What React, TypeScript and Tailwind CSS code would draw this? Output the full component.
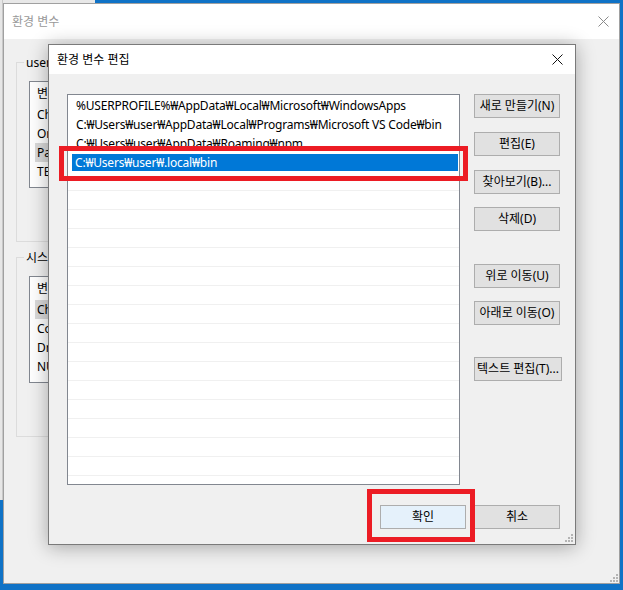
import React from 'react';

const font = "font-['Noto_Sans','Noto_Sans_CJK_KR',sans-serif]";

const CloseX = ({ color }: { color: string }) => (
  <svg width="11" height="11" viewBox="0 0 11 11">
    <path d="M0.5 0.5 L10.5 10.5 M10.5 0.5 L0.5 10.5" stroke={color} strokeWidth="1" />
  </svg>
);

const Grip = () => (
  <svg width="9" height="9" viewBox="0 0 9 9" fill="#b4b4b4">
    <rect x="7" y="1" width="2" height="2" />
    <rect x="4" y="4" width="2" height="2" />
    <rect x="7" y="4" width="2" height="2" />
    <rect x="1" y="7" width="2" height="2" />
    <rect x="4" y="7" width="2" height="2" />
    <rect x="7" y="7" width="2" height="2" />
  </svg>
);

const Btn = ({ label, className = '' }: { label: string; className?: string }) => (
  <div
    className={`w-[86px] h-[24px] border border-[#adadad] bg-[#e1e1e1] flex items-center justify-center text-[12px] text-black whitespace-nowrap ${className}`}
  >
    {label}
  </div>
);

const GroupBox = ({ label, rows, sel }: { label: string; rows: string[]; sel: number }) => (
  <div className="relative w-[320px] h-[180px] border border-[#dcdcdc]">
    <span className="absolute -top-[8px] left-[7px] bg-[#f0f0f0] px-[2px] text-[12px] leading-[16px] text-black">
      {label}
    </span>
    <div className="ml-[12px] mt-[18px] w-[260px] h-[107px] border border-[#828790] bg-white">
      <div className="h-[23px] pl-[7px] flex items-center text-[12px] text-black">변</div>
      {rows.map((r, i) => (
        <div
          key={i}
          className={`h-[19px] ml-[5px] pl-[2px] flex items-center text-[12px] text-black ${i === sel ? 'bg-[#d9d9d9]' : ''}`}
        >
          {r}
        </div>
      ))}
    </div>
  </div>
);

const paths = [
  '%USERPROFILE%₩AppData₩Local₩Microsoft₩WindowsApps',
  'C:₩Users₩user₩AppData₩Local₩Programs₩Microsoft VS Code₩bin',
  'C:₩Users₩user₩AppData₩Roaming₩npm',
];

export default function App() {
  return (
    <div className={`relative w-[623px] h-[590px] overflow-hidden bg-[#0f72c6] ${font}`}>
      {/* desktop window behind */}
      <div className="absolute left-0 top-0 w-[95px] h-[3px] bg-[#e8e8e8]" />
      <div className="absolute left-0 top-0 w-[3px] h-[500px] bg-[#e6e6e6] border-r border-[#c8c8c8]" />

      {/* 환경 변수 */}
      <div className="absolute left-[3px] top-[3px] w-[617px] h-[581px] border border-[#a0a0a0] bg-[#f0f0f0] flex flex-col">
        <div className="h-[35px] bg-white flex items-center justify-between pl-[8px] pr-[10px]">
          <span className="text-[12px] text-[#999999]">환경 변수</span>
          <CloseX color="#8a8a8a" />
        </div>
        <div className="flex flex-col pl-[12px] pt-[23px]">
          <GroupBox label="user" rows={['Ch', 'Or', 'Pa', 'TE']} sel={2} />
          <div className="mt-[15px]">
            <GroupBox label="시스템 변수" rows={['Ch', 'Co', 'Dr', 'NU']} sel={0} />
          </div>
        </div>
        <div className="absolute right-[1px] bottom-[1px]">
          <Grip />
        </div>
      </div>

      {/* 환경 변수 편집 */}
      <div className="absolute left-[48px] top-[44px] w-[528px] h-[501px] border border-[#7a7a7a] bg-[#f0f0f0] shadow-[0_2px_18px_rgba(0,0,0,0.32)] flex flex-col">
        <div className="h-[29px] bg-white flex items-center justify-between pl-[8px] pr-[12px]">
          <span className="text-[12px] text-black">환경 변수 편집</span>
          <CloseX color="#111111" />
        </div>
        <div className="flex pl-[18px] pt-[20px]">
          <div className="w-[393px] h-[391px] border border-[#828790] bg-white overflow-hidden pt-[1px] tracking-[-0.2px]">
            {paths.map((p) => (
              <div key={p} className="h-[19px] pl-[8px] flex items-center text-[12px] text-black whitespace-nowrap">
                {p}
              </div>
            ))}
            <div className="h-[19px] pt-[1px]">
              <div className="h-[17px] ml-[4px] mr-[1px] bg-[#0078d7] pl-[3px] flex items-center text-[12px] text-white">
                C:₩Users₩user₩.local₩bin
              </div>
            </div>
            {Array.from({ length: 16 }).map((_, i) => (
              <div key={i} className="h-[19px] border-b border-[#f0f0f0]" />
            ))}
          </div>
          <div className="ml-[14px] flex flex-col">
            <Btn label="새로 만들기(N)" />
            <Btn label="편집(E)" className="mt-[14px]" />
            <Btn label="찾아보기(B)..." className="mt-[14px]" />
            <Btn label="삭제(D)" className="mt-[13px]" />
            <Btn label="위로 이동(U)" className="mt-[33px]" />
            <Btn label="아래로 이동(O)" className="mt-[13px]" />
            <Btn label="텍스트 편집(T)..." className="mt-[32px] w-[88px]" />
          </div>
        </div>
        <div className="flex justify-end gap-[8px] pr-[15px] mt-[20px]">
          <Btn label="확인" className="bg-[#e5f1fb] border-[#0078d7]" />
          <Btn label="취소" />
        </div>
        <div className="absolute right-[2px] bottom-[2px]">
          <Grip />
        </div>
      </div>

      {/* red annotations */}
      <div className="absolute left-[59px] top-[146px] w-[409px] h-[35px] border-[5px] border-[#ec1c24]" />
      <div className="absolute left-[367px] top-[489px] w-[108px] h-[53px] border-[5px] border-[#ec1c24]" />
    </div>
  );
}
